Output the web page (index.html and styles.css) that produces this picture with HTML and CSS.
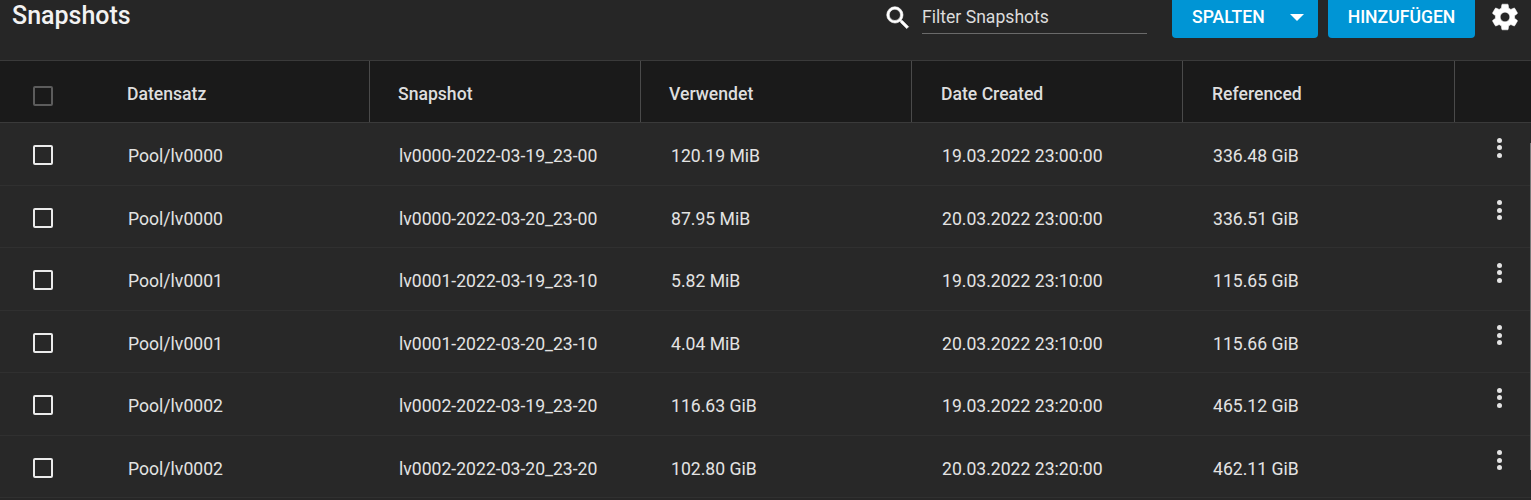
FILE: index.html
```html
<!DOCTYPE html>
<html lang="de">
<head>
<meta charset="utf-8">
<title>Snapshots</title>
<link rel="stylesheet" href="styles.css">
</head>
<body>
<div class="toolbar">
  <h1 class="title">Snapshots</h1>
  <div class="actions">
    <svg class="search-icon" viewBox="0 0 24 24" width="30" height="30"><path fill="#fff" stroke="#fff" stroke-width=".5" d="M15.5 14h-.79l-.28-.27A6.47 6.47 0 0 0 16 9.5 6.5 6.5 0 1 0 9.5 16c1.61 0 3.09-.59 4.23-1.57l.27.28v.79l5 4.99L20.49 19l-4.99-5zm-6 0C7.01 14 5 11.99 5 9.5S7.01 5 9.5 5 14 7.01 14 9.5 11.99 14 9.5 14z"/></svg>
    <div class="filter">Filter Snapshots</div>
    <button class="btn btn-columns"><span>SPALTEN</span><i class="caret"></i></button>
    <button class="btn btn-add">HINZUFÜGEN</button>
    <svg class="gear" viewBox="0 0 24 24" width="32" height="32"><path fill="#fff" stroke="#fff" stroke-width=".4" d="M19.14 12.94c.04-.3.06-.61.06-.94 0-.32-.02-.64-.07-.94l2.03-1.58a.49.49 0 0 0 .12-.61l-1.92-3.32a.488.488 0 0 0-.59-.22l-2.39.96c-.5-.38-1.03-.7-1.62-.94l-.36-2.54a.484.484 0 0 0-.48-.41h-3.84c-.24 0-.43.17-.47.41l-.36 2.54c-.59.24-1.13.57-1.62.94l-2.39-.96c-.22-.08-.47 0-.59.22L2.74 8.87c-.12.21-.08.47.12.61l2.03 1.58c-.05.3-.09.63-.09.94s.02.64.07.94l-2.03 1.58a.49.49 0 0 0-.12.61l1.92 3.32c.12.22.37.29.59.22l2.39-.96c.5.38 1.03.7 1.62.94l.36 2.54c.05.24.24.41.48.41h3.84c.24 0 .44-.17.47-.41l.36-2.54c.59-.24 1.13-.56 1.62-.94l2.39.96c.22.08.47 0 .59-.22l1.92-3.32c.12-.22.07-.47-.12-.61l-2.01-1.58zM12 15.6c-1.98 0-3.6-1.62-3.6-3.6s1.62-3.6 3.6-3.6 3.6 1.62 3.6 3.6-1.62 3.6-3.6 3.6z"/></svg>
  </div>
</div>
<div class="table">
  <div class="row head">
    <div class="cell check"><span class="box box-head"></span></div>
    <div class="cell">Datensatz</div>
    <div class="cell">Snapshot</div>
    <div class="cell">Verwendet</div>
    <div class="cell">Date Created</div>
    <div class="cell">Referenced</div>
    <div class="cell last"></div>
  </div>
  <div class="row">
    <div class="cell check"><span class="box"></span></div>
    <div class="cell">Pool/lv0000</div>
    <div class="cell">lv0000-2022-03-19_23-00</div>
    <div class="cell">120.19 MiB</div>
    <div class="cell">19.03.2022 23:00:00</div>
    <div class="cell">336.48 GiB</div>
    <div class="cell more"><span class="dots"><i></i><i></i><i></i></span></div>
  </div>
  <div class="row">
    <div class="cell check"><span class="box"></span></div>
    <div class="cell">Pool/lv0000</div>
    <div class="cell">lv0000-2022-03-20_23-00</div>
    <div class="cell">87.95 MiB</div>
    <div class="cell">20.03.2022 23:00:00</div>
    <div class="cell">336.51 GiB</div>
    <div class="cell more"><span class="dots"><i></i><i></i><i></i></span></div>
  </div>
  <div class="row">
    <div class="cell check"><span class="box"></span></div>
    <div class="cell">Pool/lv0001</div>
    <div class="cell">lv0001-2022-03-19_23-10</div>
    <div class="cell">5.82 MiB</div>
    <div class="cell">19.03.2022 23:10:00</div>
    <div class="cell">115.65 GiB</div>
    <div class="cell more"><span class="dots"><i></i><i></i><i></i></span></div>
  </div>
  <div class="row">
    <div class="cell check"><span class="box"></span></div>
    <div class="cell">Pool/lv0001</div>
    <div class="cell">lv0001-2022-03-20_23-10</div>
    <div class="cell">4.04 MiB</div>
    <div class="cell">20.03.2022 23:10:00</div>
    <div class="cell">115.66 GiB</div>
    <div class="cell more"><span class="dots"><i></i><i></i><i></i></span></div>
  </div>
  <div class="row">
    <div class="cell check"><span class="box"></span></div>
    <div class="cell">Pool/lv0002</div>
    <div class="cell">lv0002-2022-03-19_23-20</div>
    <div class="cell">116.63 GiB</div>
    <div class="cell">19.03.2022 23:20:00</div>
    <div class="cell">465.12 GiB</div>
    <div class="cell more"><span class="dots"><i></i><i></i><i></i></span></div>
  </div>
  <div class="row">
    <div class="cell check"><span class="box"></span></div>
    <div class="cell">Pool/lv0002</div>
    <div class="cell">lv0002-2022-03-20_23-20</div>
    <div class="cell">102.80 GiB</div>
    <div class="cell">20.03.2022 23:20:00</div>
    <div class="cell">462.11 GiB</div>
    <div class="cell more"><span class="dots"><i></i><i></i><i></i></span></div>
  </div>
</div>
<div class="scroll-thumb"></div>
</body>
</html>
```
FILE: styles.css
```css
* { box-sizing: border-box; }
html, body { margin: 0; height: 500px; overflow: hidden; }
body { position: relative; background: #262626; color: #e3e3e3; font-family: Roboto, "Liberation Sans", sans-serif; font-size: 17.6px; }

.toolbar { height: 60px; display: flex; justify-content: space-between; align-items: flex-start; padding-left: 12px; }
.title { margin: 0; font-size: 25px; line-height: 32px; font-weight: 500; color: #f2f2f2; }
.actions { display: flex; align-items: flex-start; }
.search-icon { margin-top: 3px; }
.filter { width: 225px; height: 34px; margin: 0 25px 0 9px; padding-top: 7px; line-height: 21px; color: #dcdcdc; border-bottom: 1px solid #6a6a6a; }
.btn { height: 38px; border: 0; border-radius: 0 0 4px 4px; background: #0095d5; color: #fff; font: 500 17.6px Roboto, sans-serif; display: flex; align-items: center; padding: 0 0 4px; }
.btn-columns { width: 146px; padding: 0 0 4px 20px; margin-right: 10px; }
.btn-add { width: 147px; justify-content: center; margin-right: 14px; }
.caret { width: 0; height: 0; margin-left: 25px; border-left: 7px solid transparent; border-right: 7px solid transparent; border-top: 7px solid #fff; }
.gear { margin-top: 1px; margin-right: 10px; }

.table { border-top: 1px solid #3a3a3a; }
.row { display: grid; grid-template-columns: 98px 271px 272px 271px 271px 272px 1fr; height: 62.5px; border-bottom: 1px solid #303030; background: #282828; align-items: stretch; }
.cell { display: flex; align-items: center; padding-left: 30px; padding-top: 5px; }
.head { grid-template-columns: 99px 271px 271px 271px 271px 272px 1fr; height: 62px; background: #1a1a1a; border-bottom: 1px solid #3a3a3a; font-weight: 500; color: #dedede; }
.head .cell { padding-left: 28px; padding-top: 4px; padding-bottom: 0; border-right: 1px solid #4a4a4a; }
.head .cell:nth-child(5), .head .cell:nth-child(6) { padding-left: 29px; }
.head .check { border-right: 0; padding-left: 33px; padding-top: 0; }
.head .last { border-right: 0; }
.check { padding-left: 33px; padding-top: 3px; }
.box { display: block; width: 20px; height: 20px; border: 2px solid #ebebeb; border-radius: 2px; }
.box-head { border-color: #5c5c5c; margin-top: 8px; }
.more { padding-left: 0; align-items: flex-start; padding-top: 14.5px; justify-content: flex-end; padding-right: 29px; }
.dots { display: flex; flex-direction: column; gap: 2.5px; }
.dots i { display: block; width: 5px; height: 5px; border-radius: 50%; background: #e3e3e3; }
.scroll-thumb { position: absolute; top: 143px; right: 0; width: 1px; height: 327px; background: #7a7a7a; }
```
